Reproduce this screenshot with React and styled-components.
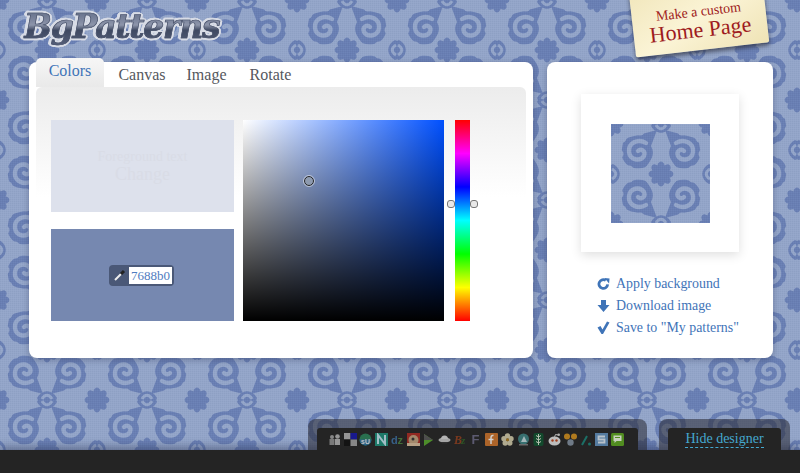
import React from "react";
import styled, { createGlobalStyle } from "styled-components";

const D = "#697fb4";
const L = "#93a5c9";
const curl = `<path d='M-15 -8C-12 -16 -2 -14 4 -17L19 -21 13 -5C18 4 12 10 8 16 0 19-10 17-14 10-18 4-16 -2-15 -8z' fill='${D}'/><path d='M8 -8C0 -13 -10 -8 -9 1 -8 9 2 11 6 5 8 0 3-3 0 0' fill='none' stroke='${L}' stroke-width='4.4' stroke-linecap='round'/><g fill='${L}'><circle cx='-16' cy='-13' r='4.500'/><circle cx='-19' cy='3' r='4.500'/><circle cx='-9' cy='19' r='4.500'/><circle cx='11' cy='19' r='4.500'/><circle cx='19' cy='6' r='4'/><circle cx='2' cy='-20' r='4.500'/></g>`;
const flower = (x, y) =>
  `<g transform='translate(${x} ${y})' fill='${D}'>` +
  [0, 45, 90, 135, 180, 225, 270, 315].map((a) => `<ellipse cx='0' cy='-7' rx='3.8' ry='5.4' transform='rotate(${a})'/>`).join("") +
  `<circle r='5.5'/></g>`;
const curls = [
  [27, 27, 1, 0], [73, 27, -1, 0], [73, 73, 1, 180], [27, 73, -1, 180],
]
  .map(([x, y, m, r]) => `<g transform='translate(${x} ${y}) rotate(${r}) scale(${m} 1)'>${curl}</g>`)
  .join("");
const wedges = [
  [0, 50, 90], [100, 50, 270], [50, 0, 180], [50, 100, 0],
]
  .map(([x, y, r]) => `<g transform='translate(${x} ${y}) rotate(${r})'><path d='M-10 -2C-5 -11 5 -11 10 -2L4 12-4 12z' fill='${D}'/><path d='M-5 -1C-2 -6 2 -6 5 -1' fill='none' stroke='${L}' stroke-width='3'/></g>`)
  .join("");
const tileSvg = `<svg xmlns='http://www.w3.org/2000/svg' width='100' height='100' viewBox='0 0 100 100'><defs><filter id='s' x='0' y='0' width='100%' height='100%'><feGaussianBlur stdDeviation='.45'/></filter><pattern id='w' width='2' height='2' patternUnits='userSpaceOnUse'><rect width='1' height='1' fill='#fff' opacity='.035'/><rect x='1' y='1' width='1' height='1' fill='#000' opacity='.03'/></pattern></defs><rect width='100' height='100' fill='${L}'/><g filter='url(#s)'>${curls}${wedges}${flower(50, 50)}${flower(0, 0)}${flower(100, 0)}${flower(0, 100)}${flower(100, 100)}</g><rect width='100' height='100' fill='url(#w)'/></svg>`;
const tile = `url("data:image/svg+xml,${encodeURIComponent(tileSvg)}")`;

const Global = createGlobalStyle`
  html, body { margin: 0; padding: 0; height: 100%; }
  body { font-family: "Liberation Serif", Georgia, serif; overflow: hidden; }
`;

const Page = styled.div`
  position: relative;
  width: 800px;
  height: 473px;
  overflow: hidden;
  display: flex;
  flex-direction: column;
  background-image: ${tile};
  background-position: -3px 0;
`;
const Header = styled.header`
  height: 62px;
  flex: none;
  padding: 7px 0 0 24px;
  box-sizing: border-box;
`;
const Logo = styled.div`
  font: italic bold 33px/40px "DejaVu Serif", serif;
  letter-spacing: -1.25px;
  width: 205px;
  white-space: nowrap;
  background: linear-gradient(#5a6580 0%, #7a839b 30%, #8d95aa 45%, #3f4962 58%, #56607a 100%);
  -webkit-background-clip: text;
  background-clip: text;
  color: transparent;
  -webkit-text-stroke: .7px #4a536c;
  filter: drop-shadow(1.5px 1px 0 #d8dce6) drop-shadow(-1.5px -1px 0 #d8dce6) drop-shadow(1px -1px 0 #d8dce6) drop-shadow(-1px 1px 0 #d8dce6);
`;
const Badge = styled.a`
  position: absolute;
  left: 632px;
  top: -16px;
  width: 134px;
  height: 66px;
  box-sizing: border-box;
  padding-top: 20px;
  transform: rotate(-6.5deg);
  background: linear-gradient(150deg, #f1e6bb 0%, #fbf4d6 50%, #efe3b5 100%);
  box-shadow: 0 3px 4px rgba(30, 30, 40, .6);
  border-radius: 2px;
  color: #9e1a20;
  text-align: center;
`;
const BadgeSmall = styled.div`
  font-size: 14px;
  line-height: 15px;
`;
const BadgeBig = styled.div`
  font-size: 22px;
  line-height: 22px;
`;
const Columns = styled.main`
  display: flex;
  gap: 14px;
  padding-left: 29px;
`;
const Panel = styled.section`
  position: relative;
  box-sizing: border-box;
  height: 296px;
  width: ${(p) => p.$w}px;
  background: #fff;
  border-radius: 8px;
  box-shadow: 0 2px 6px rgba(40, 50, 80, .35);
`;
const Tabs = styled.nav`
  position: absolute;
  left: 7px;
  top: -4px;
  display: flex;
  align-items: flex-start;
`;
const Tab = styled.a`
  height: 29px;
  width: ${(p) => p.$w}px;
  box-sizing: border-box;
  text-align: center;
  font-size: 16px;
  line-height: ${(p) => (p.$active ? 26 : 34)}px;
  color: ${(p) => (p.$active ? "#3f74b8" : "#55585e")};
  border-radius: 5px 5px 0 0;
  background: ${(p) => (p.$active ? "linear-gradient(#f6f6f6, #e9e9e9)" : "transparent")};
`;
const TabBody = styled.div`
  position: absolute;
  left: 7px;
  right: 7px;
  top: 25px;
  height: 110px;
  border-radius: 6px 6px 0 0;
  background: linear-gradient(#ececec, #fff);
`;
const Editor = styled.div`
  position: relative;
  display: flex;
  padding: 58px 0 0 22px;
`;
const Swatches = styled.div`
  display: flex;
  flex-direction: column;
  gap: 17px;
  margin-right: 9px;
`;
const Swatch = styled.div`
  width: 183px;
  height: 92px;
  display: flex;
  flex-direction: column;
  align-items: center;
  justify-content: center;
  background: ${(p) => p.$bg};
`;
const Faint = styled.div`
  color: #d9dce6;
  text-align: center;
`;
const FaintSmall = styled(Faint)`
  font-size: 14px;
  line-height: 15px;
`;
const FaintBig = styled(Faint)`
  font-size: 18px;
  line-height: 20px;
`;
const ColorField = styled.div`
  display: flex;
  width: 65px;
  height: 21px;
  margin-left: -2px;
  box-sizing: border-box;
  border: 2px solid #4a5877;
  border-left-width: 1px;
  border-radius: 4px;
  background: #4a5877;
`;
const Dropper = styled.div`
  width: 19px;
  display: flex;
  align-items: center;
  justify-content: center;
`;
const HexInput = styled.div`
  flex: 1;
  background: #fff;
  color: #4f7cc0;
  font-size: 13px;
  line-height: 17px;
  text-align: center;
`;
const SVBox = styled.div`
  position: relative;
  width: 201px;
  height: 201px;
  background: linear-gradient(transparent, #000), linear-gradient(90deg, #fff, #0050ff);
`;
const SVMarker = styled.div`
  position: absolute;
  left: 61px;
  top: 56px;
  width: 8px;
  height: 8px;
  border: 1px solid #222;
  outline: 1px solid rgba(255, 255, 255, .5);
  border-radius: 50%;
  background: rgba(150, 160, 175, .75);
`;
const Hue = styled.div`
  position: relative;
  width: 15px;
  height: 201px;
  margin-left: 11px;
  background: linear-gradient(#f00, #f0f 16.66%, #00f 33.33%, #0ff 50%, #0f0 66.66%, #ff0 83.33%, #f00);
`;
const Handle = styled.span`
  position: absolute;
  top: 80px;
  ${(p) => (p.$right ? "left: 15px;" : "left: -8px;")}
  width: 8px;
  height: 8px;
  box-sizing: border-box;
  border: 1px solid #777;
  border-radius: 3px;
  background: #e8e8e8;
`;
const Side = styled.div`
  display: flex;
  flex-direction: column;
  align-items: center;
  padding-top: 32px;
`;
const Frame = styled.div`
  box-sizing: border-box;
  width: 158px;
  height: 158px;
  padding: 30px;
  background: #fff;
  box-shadow: 0 3px 10px rgba(0, 0, 0, .13);
`;
const Preview = styled.div`
  width: 99px;
  height: 99px;
  background-image: ${tile};
`;
const Actions = styled.ul`
  list-style: none;
  margin: 21px 0 0 50px;
  padding: 0;
  align-self: flex-start;
`;
const Action = styled.li`
  display: flex;
  align-items: center;
  gap: 6px;
  height: 22px;
  color: #3f74b8;
  font-size: 13.9px;
  white-space: nowrap;
`;
const Footer = styled.footer`
  margin-top: auto;
  position: relative;
  height: 23px;
  background: #242424;
  box-shadow: 0 -3px 8px rgba(30, 40, 70, .45);
`;
const Shelf = styled.div`
  position: absolute;
  bottom: 23px;
  left: ${(p) => p.$x}px;
  width: ${(p) => p.$w}px;
  height: 31px;
  box-sizing: border-box;
  padding: 9px 9px 0;
  border-radius: 8px 8px 0 0;
  background: rgba(40, 40, 50, .55);
`;
const ShelfInner = styled.div`
  height: 22px;
  display: flex;
  align-items: center;
  justify-content: ${(p) => (p.$center ? "center" : "flex-start")};
  padding-left: ${(p) => (p.$center ? 0 : 11)}px;
  background: #242424;
  border-radius: 3px 3px 0 0;
`;
const IconSlot = styled.svg`
  width: 13px;
  height: 13px;
  margin-right: 2.72px;
  flex: none;
  opacity: .85;
`;
const Hide = styled.a`
  color: #44a8cf;
  font-size: 14px;
  line-height: 16px;
  border-bottom: 1px dashed #44a8cf;
`;

const I = ({ children }) => <IconSlot viewBox="0 0 13 13">{children}</IconSlot>;
const T = ({ c, children, s = 11 }) => (
  <text x="6.5" y="11" textAnchor="middle" fontFamily="Liberation Sans, sans-serif" fontWeight="700" fontSize={s} fill={c}>{children}</text>
);
const icons = [
  <I key="a"><circle cx="4" cy="4" r="2" fill="#999" /><circle cx="9.5" cy="3.5" r="2.3" fill="#aaa" /><rect x="1.5" y="6" width="5" height="6" fill="#888" /><rect x="7" y="6" width="5" height="6" fill="#aaa" /></I>,
  <I key="b"><rect width="6.5" height="6.5" fill="#aaa" /><rect x="6.5" width="6.5" height="6.5" fill="#1616a0" /><rect y="6.5" width="6.5" height="6.5" fill="#111" /><rect x="6.5" y="6.5" width="6.5" height="6.5" fill="#999" /></I>,
  <I key="c"><circle cx="6.5" cy="6.5" r="6" fill="#2a7d56" /><path d="M0.5 6.5a6 6 0 0 0 12 0z" fill="#2d6f9a" /><T c="#ddd" s={7}>sU</T></I>,
  <I key="d"><rect width="13" height="13" fill="#1d8a76" /><path d="M3 11V2l7 9V2" fill="none" stroke="#b8d8e2" strokeWidth="2" /></I>,
  <I key="e"><text x="0" y="11" fontFamily="Liberation Sans, sans-serif" fontWeight="700" fontSize="11" fill="#3a6a99">d</text><text x="6.4" y="11" fontFamily="Liberation Sans, sans-serif" fontWeight="700" fontSize="11" fill="#4a7d3c">z</text></I>,
  <I key="f"><rect width="13" height="13" fill="#a52a22" /><circle cx="6.5" cy="7" r="5" fill="#b99a78" /><rect y="10" width="13" height="3" fill="#d0b696" /><circle cx="6" cy="6" r="1.5" fill="#333" /></I>,
  <I key="g"><path d="M2 1l9 6-9 6z" fill="#55a02c" /><path d="M2 1l9 6-9 0z" fill="#555" /></I>,
  <I key="h"><ellipse cx="6.5" cy="7" rx="6" ry="2.5" fill="#bbb" /><path d="M3 6a3.5 3.5 0 0 1 7 0z" fill="#ccc" /><rect x="4" y="9" width="5" height="1.5" fill="#333" /></I>,
  <I key="i"><text x="0" y="11" fontFamily="Liberation Serif, serif" fontStyle="italic" fontWeight="700" fontSize="12" fill="#8a3d1e">B</text><text x="7" y="11" fontFamily="Liberation Serif, serif" fontStyle="italic" fontWeight="700" fontSize="11" fill="#2f5f24">z</text></I>,
  <I key="j"><T c="#66647e" s={13}>F</T></I>,
  <I key="k"><rect width="13" height="13" rx="1" fill="#c4702a" /><path d="M8.5 2.5C6.5 2 6 3.5 6 5v6M3.5 6.5h5" fill="none" stroke="#eee" strokeWidth="1.5" /></I>,
  <I key="l"><g fill="#c9c2a2"><circle cx="6.5" cy="3" r="2.7" /><circle cx="3" cy="5.7" r="2.7" /><circle cx="10" cy="5.7" r="2.7" /><circle cx="4.2" cy="10" r="2.7" /><circle cx="8.8" cy="10" r="2.7" /></g><circle cx="6.5" cy="6.7" r="1.5" fill="#a8781e" /></I>,
  <I key="m"><circle cx="6.5" cy="6" r="5.5" fill="#3b7d7d" /><path d="M4 9l3-6 3 6z" fill="#b8d0d2" /><rect x="2" y="11" width="9" height="1.5" fill="#777" /></I>,
  <I key="n"><rect x="1.5" width="10" height="13" rx="2" fill="#10502e" /><path d="M6.5 1v11M6.5 4l2.5-1.5M6.5 4L4 2.5M6.5 7l2.5-1.5M6.5 7L4 5.5M6.5 10l2.5-1.5M6.5 10L4 8.5" stroke="#cfdcc8" fill="none" /></I>,
  <I key="o"><ellipse cx="6.5" cy="8" rx="6" ry="4.5" fill="#d8d8d8" /><circle cx="4.5" cy="7.5" r="1.2" fill="#b5431c" /><circle cx="8.5" cy="7.5" r="1.2" fill="#b5431c" /><circle cx="10.7" cy="1.8" r="1.3" fill="#ccc" /><path d="M6.5 4l1-2.5 3 .5" stroke="#ccc" fill="none" /></I>,
  <I key="p"><circle cx="3" cy="3.5" r="3" fill="#c98a1e" /><circle cx="10" cy="3.5" r="3" fill="#c98a1e" /><circle cx="6.5" cy="9.5" r="3.2" fill="#7d8a99" /></I>,
  <I key="q"><path d="M2 12L7 3" stroke="#1a7d72" strokeWidth="2" /><circle cx="9.5" cy="11" r="1.5" fill="#1a7d72" /></I>,
  <I key="r"><rect width="13" height="13" fill="#5e8bb5" /><path d="M10 3.5H3.5v3h6v3H3" fill="none" stroke="#d2dde6" strokeWidth="1.8" /></I>,
  <I key="s"><rect width="13" height="13" rx="1.5" fill="#5aa020" /><path d="M2.5 2.5h8v5.5h-5l-2 2v-2h-1z" fill="#e4eed8" /><rect x="4" y="4" width="5" height="1" fill="#5aa020" /></I>,
];

export default function App() {
  return (
    <Page>
      <Global />
      <Header>
        <Logo>BgPatterns</Logo>
      </Header>
      <Badge>
        <BadgeSmall>Make a custom</BadgeSmall>
        <BadgeBig>Home Page</BadgeBig>
      </Badge>
      <Columns>
        <Panel $w={504}>
          <TabBody />
          <Tabs>
            <Tab $w={68} $active>Colors</Tab>
            <Tab $w={76}>Canvas</Tab>
            <Tab $w={53}>Image</Tab>
            <Tab $w={75}>Rotate</Tab>
          </Tabs>
          <Editor>
            <Swatches>
              <Swatch $bg="#dde1ec">
                <FaintSmall>Foreground text</FaintSmall>
                <FaintBig>Change</FaintBig>
              </Swatch>
              <Swatch $bg="#7688b0">
                <ColorField>
                  <Dropper>
                    <svg width="14" height="14" viewBox="0 0 14 14">
                      <path d="M2 12L8 6" stroke="#eee" strokeWidth="2" />
                      <path d="M8 6l3-3" stroke="#222" strokeWidth="3" />
                    </svg>
                  </Dropper>
                  <HexInput>7688b0</HexInput>
                </ColorField>
              </Swatch>
            </Swatches>
            <SVBox><SVMarker /></SVBox>
            <Hue>
              <Handle />
              <Handle $right />
            </Hue>
          </Editor>
        </Panel>
        <Panel $w={226}>
          <Side>
            <Frame><Preview /></Frame>
            <Actions>
              <Action>
                <svg width="13" height="14" viewBox="0 0 14 14">
                  <path d="M11.5 7.5A4.7 4.7 0 1 1 9.5 3.2" fill="none" stroke="#3f74b8" strokeWidth="3" />
                  <path d="M8 0.5l5.5 .5-.5 5.5z" fill="#3f74b8" />
                </svg>
                Apply background
              </Action>
              <Action>
                <svg width="13" height="14" viewBox="0 0 13 14">
                  <path d="M4 1h5v5h3.5L6.5 13 .5 6H4z" fill="#3f74b8" />
                </svg>
                Download image
              </Action>
              <Action>
                <svg width="13" height="14" viewBox="0 0 13 14">
                  <path d="M.5 6.5l3-1.500 2 3.500L10 .5l2.500 1-6.500 11.500h-1.500z" fill="#3f74b8" />
                </svg>
                Save to "My patterns"
              </Action>
            </Actions>
          </Side>
        </Panel>
      </Columns>
      <Footer>
        <Shelf $x={308} $w={339}>
          <ShelfInner>{icons}</ShelfInner>
        </Shelf>
        <Shelf $x={659} $w={131}>
          <ShelfInner $center>
            <Hide>Hide designer</Hide>
          </ShelfInner>
        </Shelf>
      </Footer>
    </Page>
  );
}
